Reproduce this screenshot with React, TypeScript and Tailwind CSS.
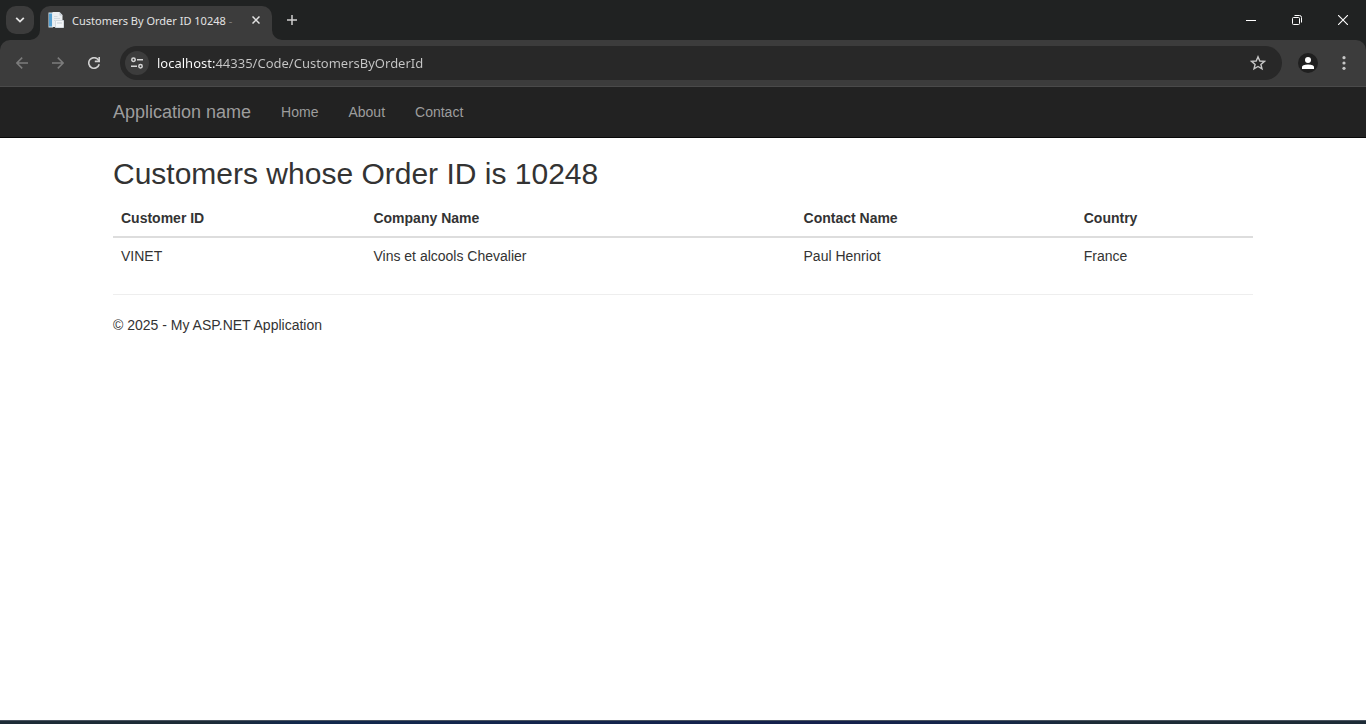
import type { ReactNode } from "react";

const customers = [
  { id: "VINET", company: "Vins et alcools Chevalier", contact: "Paul Henriot", country: "France" },
];

const columns = ["Customer ID", "Company Name", "Contact Name", "Country"];

function IconButton({ label, className, children }: { label: string; className: string; children: ReactNode }) {
  return (
    <button type="button" aria-label={label} className={`flex shrink-0 items-center justify-center ${className}`}>
      {children}
    </button>
  );
}

function PageIcon() {
  return (
    <svg width="16" height="16" viewBox="0 0 16 16" className="shrink-0" aria-hidden="true">
      <path d="M0.5 0.5H5V15.5H0.5z" fill="#dfe8ef" />
      <path d="M1 1.5H4V14.5H1z" fill="#559fd0" />
      <path d="M4.5 0H11.5L14.5 3V15H4.5z" fill="#eceff2" />
      <path d="M11.5 0V3.5H14.5z" fill="#c2cad1" />
      <path d="M6 4.5H9.5M6 6.5H12M6 8.5H7" stroke="#d3dae0" />
      <path d="M7.5 8.5H15.5V15.5H7.5z" fill="#f4f6f8" stroke="#d3dae0" />
      <path d="M9 11H14" stroke="#c3cdd5" />
    </svg>
  );
}

function TabStrip() {
  return (
    <div className="flex h-10 items-center bg-[#202222]">
      <IconButton label="Search tabs" className="mx-1.5 size-7 rounded-[10px] bg-[#3c3c3c]">
        <svg width="10" height="6" viewBox="0 0 10 6" fill="none" stroke="#e3e3e3" strokeWidth="1.8" aria-hidden="true">
          <path d="M1.2 0.8L5 4.6L8.8 0.8" />
        </svg>
      </IconButton>
      <div className="relative flex h-[34px] w-[232px] items-center self-end rounded-t-[10px] bg-[#3c3c3c] pr-2 pb-1.5 pl-2">
        <svg width="10" height="10" viewBox="0 0 10 10" className="absolute bottom-0 -left-2.5" aria-hidden="true">
          <path d="M10 0V10H0A10 10 0 0 0 10 0z" fill="#3c3c3c" />
        </svg>
        <svg width="10" height="10" viewBox="0 0 10 10" className="absolute -right-2.5 bottom-0" aria-hidden="true">
          <path d="M0 0V10H10A10 10 0 0 1 0 0z" fill="#3c3c3c" />
        </svg>
        <PageIcon />
        <span className="mt-0.5 ml-2 min-w-0 flex-1 overflow-hidden text-[11px] leading-4 whitespace-nowrap text-[#e3e3e3]">
          Customers By Order ID 10248 <span className="text-[#808080]">-</span>
        </span>
        <IconButton label="Close tab" className="size-4">
          <svg width="8" height="8" viewBox="0 0 8 8" fill="none" stroke="#e3e3e3" strokeWidth="1.5" aria-hidden="true">
            <path d="M0.5 0.5L7.5 7.5M7.5 0.5L0.5 7.5" />
          </svg>
        </IconButton>
      </div>
      <IconButton label="New tab" className="ml-1.5 size-7">
        <svg width="10" height="10" viewBox="0 0 10 10" fill="none" stroke="#d0d0d0" strokeWidth="1.5" aria-hidden="true">
          <path d="M5 0V10M0 5H10" />
        </svg>
      </IconButton>
      <div className="ml-auto flex">
        <IconButton label="Minimize" className="h-10 w-[46px]">
          <svg width="10" height="10" viewBox="0 0 10 10" stroke="#ffffff" aria-hidden="true">
            <path d="M0 5.5H10" />
          </svg>
        </IconButton>
        <IconButton label="Restore" className="h-10 w-[46px]">
          <svg width="10" height="10" viewBox="0 0 10 10" fill="none" stroke="#ffffff" aria-hidden="true">
            <rect x="0.5" y="2.5" width="7" height="7" rx="1" />
            <path d="M2.5 0.5H7.5Q9.5 0.5 9.5 2.5V7.5" />
          </svg>
        </IconButton>
        <IconButton label="Close" className="h-10 w-[46px]">
          <svg width="10" height="10" viewBox="0 0 10 10" stroke="#ffffff" strokeWidth="1.1" aria-hidden="true">
            <path d="M0 0L10 10M10 0L0 10" />
          </svg>
        </IconButton>
      </div>
    </div>
  );
}

function Toolbar() {
  return (
    <div className="bg-[#202222]">
      <div className="flex h-[47px] items-center rounded-t-[10px] border-b border-[#4a4a4a] bg-[#3c3c3c] pr-2">
        <div className="flex gap-2 pl-2">
          <IconButton label="Back" className="size-7 text-[#7c7c7c]">
            <svg width="12" height="12" viewBox="0 0 12 12" fill="none" stroke="currentColor" strokeWidth="1.5" aria-hidden="true">
              <path d="M12 6H1M6.2 0.6L0.9 6L6.2 11.4" />
            </svg>
          </IconButton>
          <IconButton label="Forward" className="size-7 text-[#7c7c7c]">
            <svg width="12" height="12" viewBox="0 0 12 12" fill="none" stroke="currentColor" strokeWidth="1.5" aria-hidden="true">
              <path d="M0 6H11M5.8 0.6L11.1 6L5.8 11.4" />
            </svg>
          </IconButton>
          <IconButton label="Reload" className="size-7 text-[#d0d0d0]">
            <svg width="12" height="12" viewBox="0 0 12 12" fill="none" stroke="currentColor" strokeWidth="1.6" aria-hidden="true">
              <path d="M11.2 7.3A5.3 5.3 0 1 1 10.3 2.8L11 4" />
              <path d="M11.2 0V4.4H6.8" />
            </svg>
          </IconButton>
        </div>
        <div className="ml-3 flex h-[34px] flex-1 items-center rounded-full bg-[#282828] pr-2.5 pl-[5px]">
          <IconButton label="View site information" className="size-6 rounded-full bg-[#3c3c3c]">
            <svg width="12" height="12" viewBox="0 0 12 12" fill="none" stroke="#d6d6d6" strokeWidth="1.5" aria-hidden="true">
              <circle cx="2.5" cy="2.7" r="1.7" />
              <path d="M6 2.7H12M0 9.3H6" />
              <circle cx="9.5" cy="9.3" r="1.7" />
            </svg>
          </IconButton>
          <input
            type="text"
            aria-label="Address and search bar"
            defaultValue="localhost:44335/Code/CustomersByOrderId"
            className="ml-2 min-w-0 flex-1 bg-[linear-gradient(to_right,#ffffff_59px,#c7c7c7_59px)] bg-clip-text text-[13px] leading-5 text-transparent outline-none"
          />
          <IconButton label="Bookmark this page" className="size-7">
            <svg width="16" height="16" viewBox="0 0 16 16" fill="none" stroke="#c7c7c7" strokeWidth="1.4" aria-hidden="true">
              <path d="M8 1.8L9.8 6L14.4 6.4L10.9 9.4L12 13.9L8 11.5L4 13.9L5.1 9.4L1.6 6.4L6.2 6z" />
            </svg>
          </IconButton>
        </div>
        <IconButton label="Profile" className="ml-4 size-5 rounded-full bg-[#1f1f1f]">
          <svg width="12" height="12" viewBox="0 0 12 12" fill="#ffffff" aria-hidden="true">
            <circle cx="6" cy="3" r="3" />
            <path d="M0 12V10Q0 7.5 6 7.5T12 10V12z" />
          </svg>
        </IconButton>
        <IconButton label="Menu" className="ml-3 size-7">
          <svg width="4" height="14" viewBox="0 0 4 14" fill="#c7c7c7" aria-hidden="true">
            <circle cx="2" cy="1.7" r="1.6" />
            <circle cx="2" cy="7" r="1.6" />
            <circle cx="2" cy="12.3" r="1.6" />
          </svg>
        </IconButton>
      </div>
    </div>
  );
}

export default function App() {
  return (
    <div className="flex min-h-screen flex-col bg-white font-['Liberation_Sans',Arial,sans-serif] text-[14px] leading-5 text-[#333333]">
      <header className="font-['Noto_Sans','Open_Sans',sans-serif]">
        <TabStrip />
        <Toolbar />
      </header>
      <nav className="border-b border-[#080808] bg-[#222222]">
        <div className="mx-auto flex h-[50px] w-full max-w-[1140px] items-center text-[#9d9d9d]">
          <a href="#top" className="pr-[15px] text-[18px]">Application name</a>
          <a href="#home" className="px-[15px]">Home</a>
          <a href="#about" className="px-[15px]">About</a>
          <a href="#contact" className="px-[15px]">Contact</a>
        </div>
      </nav>
      <main className="mx-auto w-full max-w-[1140px] flex-1">
        <h1 className="mt-[19px] mb-2.5 text-[30px] leading-[33px]">Customers whose Order ID is 10248</h1>
        <table className="w-full border-collapse text-left">
          <thead>
            <tr>
              {columns.map((column) => (
                <th key={column} className="border-b-2 border-[#dddddd] p-2 font-bold">{column}</th>
              ))}
            </tr>
          </thead>
          <tbody>
            {customers.map((customer) => (
              <tr key={customer.id}>
                <td className="p-2">{customer.id}</td>
                <td className="p-2">{customer.company}</td>
                <td className="p-2">{customer.contact}</td>
                <td className="p-2">{customer.country}</td>
              </tr>
            ))}
          </tbody>
        </table>
        <hr className="my-5 border-[#eeeeee]" />
        <footer>© 2025 - My ASP.NET Application</footer>
      </main>
      <div className="h-1 border-t border-[#4a5460] bg-[linear-gradient(to_right,#1d2b36_15%,#12284c_22%,#14204c_60%,#14264a_72%,#1d2b36_80%)]" />
    </div>
  );
}
